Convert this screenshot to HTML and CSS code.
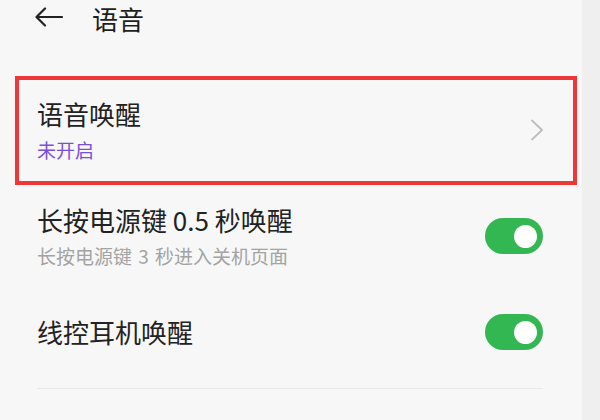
FILE: index.html
```html
<!DOCTYPE html>
<html lang="zh-CN">
<head>
<meta charset="utf-8">
<title>语音</title>
<link rel="stylesheet" href="styles.css">
</head>
<body>
<div class="screen">
  <main class="main">
    <header class="header">
      <svg class="back" width="28" height="20" viewBox="0 0 28 20" aria-hidden="true">
        <path d="M27 10H2M10 1.5L1.5 10L10 18.5" fill="none" stroke="#222" stroke-width="2.2" stroke-linecap="round" stroke-linejoin="round"/>
      </svg>
      <h1 class="title">语音</h1>
    </header>
    <section class="list">
      <div class="row row-highlight">
        <div class="text">
          <div class="row-title">语音唤醒</div>
          <div class="row-sub status">未开启</div>
        </div>
        <svg class="chev" width="14" height="22" viewBox="0 0 14 22" aria-hidden="true">
          <path d="M2 1.5L12 11L2 20.5" fill="none" stroke="#bdbdbd" stroke-width="1.8" stroke-linecap="round" stroke-linejoin="round"/>
        </svg>
      </div>
      <div class="row row-two">
        <div class="text">
          <div class="row-title">长按电源键 0.5 秒唤醒</div>
          <div class="row-sub">长按电源键 3 秒进入关机页面</div>
        </div>
        <span class="toggle"><span class="knob"></span></span>
      </div>
      <div class="row row-three">
        <div class="text">
          <div class="row-title">线控耳机唤醒</div>
        </div>
        <span class="toggle"><span class="knob"></span></span>
      </div>
    </section>
    <div class="divider"></div>
  </main>
  <aside class="strip"></aside>
</div>
</body>
</html>
```

FILE: styles.css
```css
html, body {
  margin: 0;
  padding: 0;
}
body {
  width: 600px;
  height: 420px;
  overflow: hidden;
  background: #f7f7f7;
  font-family: "Noto Sans CJK SC", "Noto Sans", sans-serif;
  color: #222;
}
.screen {
  display: flex;
  height: 420px;
}
.main {
  width: 582px;
  flex: none;
}
.strip {
  flex: 1;
  background: #efefef;
}
.header {
  display: flex;
  align-items: flex-start;
  height: 38px;
  padding-left: 35px;
}
.back {
  display: block;
  margin-top: 7px;
}
.title {
  margin: 0 0 0 29px;
  font-size: 26px;
  font-weight: 400;
  line-height: 38px;
  color: #1e1e1e;
}
.list {
  margin: 38px 0 0 15px;
  width: 562px;
}
.row {
  display: flex;
  align-items: center;
  border: 4px solid transparent;
  padding: 0 30px 0 18px;
}
.row-highlight {
  border-color: #ee3737;
  padding-top: 18px;
  padding-bottom: 19px;
}
.row-two {
  border-width: 0 4px;
  padding-top: 19px;
  padding-bottom: 19px;
}
.row-three {
  border-width: 0 4px;
  padding-top: 27px;
  padding-bottom: 38px;
}
.text {
  flex: 1;
}
.row-title {
  font-size: 26px;
  line-height: 32px;
  color: #222;
}
.row-sub {
  margin-top: 8px;
  font-size: 19px;
  line-height: 24px;
  color: #a3a3a3;
  word-spacing: 2px;
}
.status {
  color: #7a4fd8;
}
.chev {
  display: block;
  margin-right: -1px;
}
.toggle {
  position: relative;
  display: block;
  width: 58px;
  height: 36px;
  border-radius: 18px;
  background: #33b752;
}
.knob {
  position: absolute;
  right: 6px;
  top: 6.5px;
  width: 23px;
  height: 23px;
  border-radius: 50%;
  background: #fff;
}
.divider {
  margin-left: 37px;
  width: 506px;
  height: 1px;
  background: #e8e8e8;
}
```
